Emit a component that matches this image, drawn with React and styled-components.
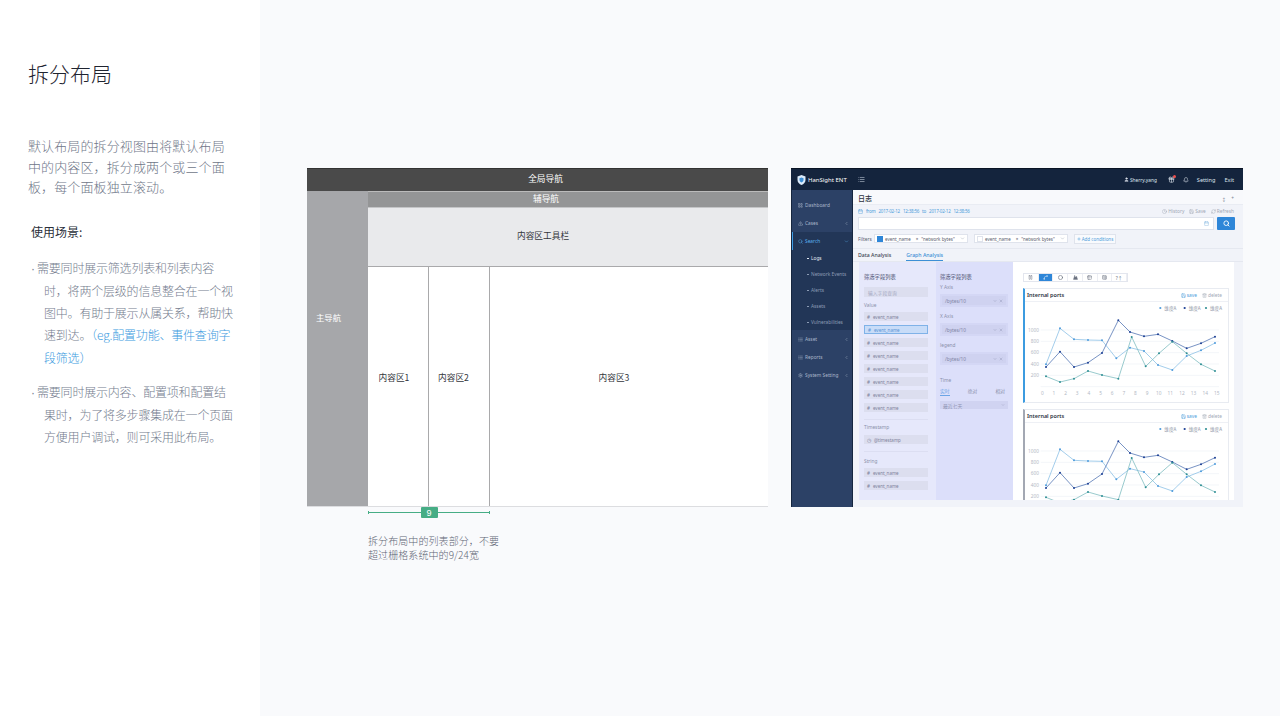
import React from 'react'
import styled, { createGlobalStyle } from 'styled-components'
import {
  AlertTriangle,
  Bell,
  Calendar,
  ChevronDown,
  ChevronLeft,
  Circle,
  Clock,
  Gift,
  LayoutGrid,
  List,
  Mountain,
  Pause,
  Plus,
  RefreshCw,
  Save,
  Search,
  Settings,
  Spline,
  Table2,
  TableProperties,
  Trash2,
  User,
  X,
} from 'lucide-react'

const CJK = `'Noto Sans CJK SC', 'Noto Sans', sans-serif`
const UI = `'Noto Sans', 'Noto Sans CJK SC', sans-serif`

// full-width punctuation of the Chinese copy
const COMMA = '\uFF0C'
const OPEN = '\uFF08'
const CLOSE = '\uFF09'

const GlobalStyle = createGlobalStyle`
  html, body {
    margin: 0;
    background: #fff;
    overflow: hidden;
  }
  * {
    box-sizing: border-box;
  }
`

const Page = styled.div`
  display: flex;
  height: 716px;
  width: 1280px;
  font-family: ${CJK};
`

const Aside = styled.aside`
  width: 260px;
  flex: none;
  padding: 58px 20px 0 28px;
  background: #fff;
`

const Title = styled.h1`
  margin: 0 0 48px;
  font-size: 21px;
  line-height: 30px;
  font-weight: 300;
  color: #1f2430;
`

const Intro = styled.p`
  margin: 0 12px 23px 0;
  font-size: 13px;
  letter-spacing: 0.12px;
  line-height: 20.5px;
  font-weight: 300;
  color: #6f7789;
`

const SceneTitle = styled.h2`
  margin: 0 0 14px 3px;
  font-size: 12px;
  line-height: 22px;
  font-weight: 400;
  color: #2a2f3a;
`

const Scene = styled.p`
  margin: 0 0 12px;
  padding-left: 16px;
  text-indent: -13px;
  font-size: 12px;
  letter-spacing: -0.2px;
  line-height: 22.25px;
  font-weight: 300;
  color: #747c8e;
`

const Bullet = styled.span`
  display: inline-block;
  width: 6px;
  text-indent: 0;
  font-family: 'Liberation Sans', sans-serif;
`

const Link = styled.span`
  color: #3c9be0;
`

const Main = styled.main`
  flex: 1;
  display: flex;
  align-items: flex-start;
  gap: 23px;
  padding: 168px 0 0 47px;
  background: #f9fafc;
`

const Diagram = styled.div`
  width: 461px;
  flex: none;
`

const Wire = styled.div`
  height: 339px;
  display: flex;
  flex-direction: column;
  border-bottom: 1px solid #dcdde0;
`

const GlobalBar = styled.div`
  height: 23px;
  flex: none;
  display: flex;
  align-items: center;
  justify-content: center;
  padding: 0 0 3px 16px;
  background: #4a4a4a;
  border-top: 1px solid #333;
  font-size: 8.7px;
  color: #fff;
`

const WireBody = styled.div`
  flex: 1;
  display: flex;
  min-height: 0;
`

const WireNav = styled.div`
  width: 61px;
  flex: none;
  display: flex;
  align-items: center;
  padding: 0 0 64px 9px;
  background: #a6a7aa;
  font-size: 8.4px;
  color: #fff;
`

const WireMain = styled.div`
  flex: 1;
  display: flex;
  flex-direction: column;
`

const SubBar = styled.div`
  height: 16px;
  flex: none;
  display: flex;
  align-items: center;
  justify-content: center;
  padding: 0 44px 3px 0;
  background: #949596;
  border-top: 1px solid #bbb;
  font-size: 8.7px;
  color: #fff;
`

const ToolBar = styled.div`
  height: 60px;
  flex: none;
  display: flex;
  align-items: center;
  justify-content: center;
  padding: 0 50px 4px 0;
  background: #e9eaec;
  border-top: 1px solid #c4c5c7;
  border-bottom: 1px solid #a9a9ab;
  font-size: 8.7px;
  color: #33363c;
`

const Panels = styled.div`
  flex: 1;
  display: flex;
  background: #fff;
`

const Pane = styled.div`
  display: flex;
  align-items: center;
  justify-content: center;
  width: ${(p) => p.$width};
  flex: ${(p) => (p.$grow ? 1 : 'none')};
  border-right: ${(p) => (p.$grow ? 'none' : '1px solid #a9a9ab')};
  padding: 0 ${(p) => p.$shift}px 18px 0;
  font-size: 8.7px;
  color: #33363c;
`

const Measure = styled.div`
  position: relative;
  width: 122px;
  height: 11px;
  margin-left: 61px;
  display: flex;
  align-items: center;
  justify-content: center;

  &::before {
    content: '';
    position: absolute;
    left: 0;
    right: 0;
    top: 5px;
    border-top: 1px solid #46ad85;
  }

  &::after {
    content: '';
    position: absolute;
    left: 0;
    right: 0;
    top: 4px;
    height: 3px;
    border-left: 1px solid #46ad85;
    border-right: 1px solid #46ad85;
  }
`

const Badge = styled.div`
  position: relative;
  width: 17px;
  height: 11px;
  display: flex;
  align-items: center;
  justify-content: center;
  background: #46ad85;
  border-radius: 1px;
  font-family: 'Liberation Sans', sans-serif;
  font-size: 9px;
  color: #fff;
`

const Caption = styled.p`
  margin: 16px 0 0 61px;
  font-size: 10px;
  line-height: 14px;
  letter-spacing: 0.08px;
  font-weight: 300;
  color: #5f6675;
`

/* the product screenshot on the right */
const Shot = styled.div`
  width: 452px;
  height: 339px;
  flex: none;
  display: flex;
  flex-direction: column;
  overflow: hidden;
  background: #f1f3f9;
  font-family: ${UI};
  font-size: 4.8px;
`

const ShotTop = styled.div`
  height: 22px;
  flex: none;
  display: flex;
  align-items: center;
  padding: 0 9px 0 6px;
  background: #14243d;
  border-top: 1px solid #0a1424;
  color: #dfe5ee;
`

const Logo = styled.div`
  width: 61px;
  display: flex;
  align-items: center;
  gap: 2px;
  font-size: 6px;
  color: #fff;
  white-space: nowrap;
`

const Collapse = styled(List)`
  color: #c6d0de;
`

const TopRight = styled.div`
  margin-left: auto;
  display: flex;
  align-items: center;
  font-size: 5.6px;
`

const TopUser = styled.span`
  display: flex;
  align-items: center;
  gap: 1px;
  margin-right: 11px;
  font-size: 4.8px;
`

const TopIcon = styled.span`
  position: relative;
  display: flex;
  margin-right: ${(p) => p.$gap}px;
`

const Dot = styled.i`
  position: absolute;
  top: -1px;
  right: -1px;
  width: 3px;
  height: 3px;
  border-radius: 50%;
  background: #f0504d;
`

const TopLink = styled.span`
  margin-left: ${(p) => p.$gap || 0}px;
`

const ShotBody = styled.div`
  flex: 1;
  display: flex;
  min-height: 0;
`

const Side = styled.nav`
  width: 62px;
  flex: none;
  padding-top: 6px;
  background: #2c4166;
  border-left: 1px solid #16263f;
  border-right: 1px solid #16263f;
`

const SideItem = styled.div`
  height: 18px;
  display: flex;
  align-items: center;
  gap: 2px;
  padding: 0 3px 0 5px;
  border-left: ${(p) => (p.$active ? '1px solid #3d9be3' : 'none')};
  margin-left: ${(p) => (p.$active ? '0' : '1px')};
  background: ${(p) => (p.$active ? '#223657' : 'transparent')};
  color: ${(p) => (p.$active ? '#59b1f0' : '#a9b6ca')};
  white-space: nowrap;
`

const SideArrow = styled.span`
  margin-left: auto;
  display: flex;
`

const SubMenu = styled.div`
  background: #223657;
`

const SubItem = styled.div`
  height: 16px;
  display: flex;
  align-items: center;
  padding-left: 15px;
  color: ${(p) => (p.$active ? '#e3e9f2' : '#8c9cb5')};
  white-space: nowrap;

  &::before {
    content: '';
    width: 2px;
    border-top: 1px solid currentColor;
    margin-right: 2px;
  }
`

const Content = styled.div`
  flex: 1;
  min-width: 0;
  display: flex;
  flex-direction: column;
`

const Head = styled.div`
  height: 15px;
  flex: none;
  display: flex;
  align-items: center;
  padding: 2px 9px 0 5px;
  border-bottom: 1px solid #e9ecf3;
  background: #f8f9fc;
`

const PageName = styled.div`
  font-family: ${CJK};
  font-size: 7px;
  font-weight: 500;
  color: #2c3240;
`

const HeadTools = styled.div`
  margin-left: auto;
  display: flex;
  gap: 5px;
  color: #7c8494;
`

const Meta = styled.div`
  height: 12px;
  flex: none;
  display: flex;
  align-items: center;
  padding: 0 9px 0 5px;
  color: #4d9ddb;
  white-space: nowrap;
`

const MetaFrom = styled.span`
  display: flex;
  align-items: center;
  gap: 3px;
  font-size: 4.5px;
  letter-spacing: -0.2px;
  word-spacing: 2px;
`

const MetaTools = styled.div`
  margin-left: auto;
  display: flex;
  gap: 5px;
  color: #a2a9b7;
`

const MetaTool = styled.span`
  display: flex;
  align-items: center;
  gap: 1px;
`

const SearchRow = styled.div`
  height: 13px;
  flex: none;
  display: flex;
  gap: 3px;
  padding: 0 8px 0 5px;
`

const SearchInput = styled.div`
  flex: 1;
  display: flex;
  align-items: center;
  justify-content: flex-end;
  padding-right: 4px;
  background: #fff;
  border: 1px solid #dfe3ec;
  color: #7fb4e0;
`

const SearchButton = styled.div`
  width: 18px;
  display: flex;
  align-items: center;
  justify-content: center;
  background: #2e86d8;
  border-radius: 1px;
  color: #fff;
`

const FilterRow = styled.div`
  height: 15px;
  margin-top: 1px;
  flex: none;
  display: flex;
  align-items: center;
  padding-left: 5px;
  color: #596070;
`

const FilterLabel = styled.span`
  width: 16px;
`

const Chip = styled.div`
  width: 94px;
  height: 9px;
  margin-right: 6px;
  display: flex;
  align-items: center;
  padding: 0 2px;
  background: #fff;
  border: 1px solid #dfe3ec;
  color: #596070;
  font-size: 4.5px;
  white-space: nowrap;
`

const Check = styled.span`
  width: 6px;
  height: 6px;
  flex: none;
  margin-right: 2px;
  background: ${(p) => (p.$on ? '#2e86d8' : '#fff')};
  border: 1px solid ${(p) => (p.$on ? '#2e86d8' : '#dfe3ec')};
`

const ChipOp = styled.span`
  margin: 0 3px 0 5px;
`

const ChipArrow = styled.span`
  margin-left: auto;
  display: flex;
  color: #9aa2b1;
`

const AddButton = styled.div`
  width: 42px;
  height: 10px;
  display: flex;
  align-items: center;
  justify-content: center;
  gap: 1px;
  background: #f9fafd;
  border: 1px solid #dfe3ec;
  color: #4d9ddb;
  font-size: 4.5px;
  white-space: nowrap;
`

const Tabs = styled.div`
  height: 14px;
  margin-top: 2px;
  flex: none;
  display: flex;
  align-items: center;
  gap: 15px;
  padding-left: 5px;
  border-top: 1px solid #e5e8f0;
  border-bottom: 1px solid #e5e8f0;
  font-size: 5.2px;
  font-weight: 500;
`

const Tab = styled.span`
  height: 100%;
  display: flex;
  align-items: center;
  color: ${(p) => (p.$active ? '#3c8fd6' : '#3f4653')};
  border-bottom: 1px solid ${(p) => (p.$active ? '#3c8fd6' : 'transparent')};
`

const Work = styled.div`
  flex: 1;
  min-height: 0;
  display: flex;
  margin: 0 9px 7px 6px;
  background: #fff;
`

const FieldPane = styled.div`
  width: ${(p) => p.$width}px;
  flex: none;
  padding: ${(p) => p.$pad};
  background: ${(p) => p.$bg};
  color: #8b90aa;
`

const PaneHead = styled.div`
  height: 8px;
  margin-top: 11px;
  display: flex;
  align-items: center;
  font-family: ${CJK};
  font-weight: 500;
  font-size: 5.3px;
  color: #6d7290;
`

const FieldSearch = styled.div`
  height: 10px;
  margin-top: 6px;
  display: flex;
  align-items: center;
  padding-left: 4px;
  background: #dcdeef;
  font-family: ${CJK};
  color: #a4a8c2;
`

const GroupLabel = styled.div`
  height: 8px;
  margin: ${(p) => p.$top}px 0 ${(p) => p.$bottom}px;
  display: flex;
  align-items: center;
`

const FieldList = styled.div`
  display: flex;
  flex-direction: column;
  gap: 4px;
`

const Field = styled.div`
  height: 9px;
  display: flex;
  align-items: center;
  gap: 3px;
  padding-left: 3px;
  font-size: 4.5px;
  background: ${(p) => (p.$active ? '#c8dcf8' : '#dcdeef')};
  border: ${(p) => (p.$active ? '1px solid #7fb2e8' : 'none')};
  color: ${(p) => (p.$active ? '#5a94d6' : '#7d829c')};
`

const Rule = styled.div`
  height: 1px;
  margin-top: 7px;
  background: #dcdef2;
`

const AxisLabel = styled.div`
  height: 8px;
  margin-top: ${(p) => p.$top}px;
  display: flex;
  align-items: center;
`

const AxisBox = styled.div`
  height: 13px;
  margin-top: 3px;
  padding: 2px;
  background: #d4d7f5;
`

const AxisValue = styled.div`
  height: 9px;
  display: flex;
  align-items: center;
  padding: 0 3px;
  background: #cfd2f0;
  color: #8085a6;
`

const AxisIcons = styled.span`
  margin-left: auto;
  display: flex;
  gap: 2px;
`

const TimeTabs = styled.div`
  height: 9px;
  margin-top: 3px;
  display: flex;
  justify-content: space-between;
  padding-right: 3px;
  font-family: ${CJK};
`

const TimeTab = styled.span`
  color: ${(p) => (p.$active ? '#6ba4e6' : '#8b90aa')};
  border-bottom: 1px solid ${(p) => (p.$active ? '#6ba4e6' : 'transparent')};
`

const TimeSelect = styled.div`
  height: 8px;
  margin-top: 5px;
  display: flex;
  align-items: center;
  padding: 0 3px;
  background: #d0d3f1;
  font-family: ${CJK};
  color: #9296b6;
`

const Charts = styled.div`
  flex: 1;
  min-width: 0;
  padding: 11px 5px 0 10px;
  overflow: hidden;
`

const ChartTools = styled.div`
  display: flex;
  width: 105px;
  height: 9px;
  border: 1px solid #e3e6ee;
`

const ChartTool = styled.span`
  flex: 1;
  display: flex;
  align-items: center;
  justify-content: center;
  background: ${(p) => (p.$active ? '#2e86d8' : '#fff')};
  color: ${(p) => (p.$active ? '#fff' : '#6b7280')};
  border-right: 1px solid #eceef3;
`

const Card = styled.section`
  height: ${(p) => p.$height}px;
  margin-top: 6px;
  overflow: hidden;
  background: #fff;
  border: 1px solid #e8ebf1;
  border-left: 2px solid ${(p) => p.$accent};
`

const CardHead = styled.div`
  height: 13px;
  display: flex;
  align-items: center;
  padding: 0 6px 0 2px;
  border-bottom: 1px solid #eef0f5;
`

const CardTitle = styled.span`
  font-size: 5.5px;
  font-weight: 600;
  color: #2c3240;
`

const CardAction = styled.span`
  display: flex;
  align-items: center;
  gap: 1px;
  margin-left: ${(p) => (p.$first ? 'auto' : '5px')};
  color: ${(p) => p.$color};
`

const ChartSvg = styled.svg`
  display: block;
`

const toX = (v) => v / 3 - 5
const toY = (v) => (v - 263) / 3

const series = [
  {
    color: '#4f9bdc',
    line: '#8cc0e6',
    points: [[78, 450], [120, 342], [162, 375], [204, 377], [246, 378], [289, 432], [330, 400], [372, 410], [414, 452], [457, 467], [500, 425], [543, 408], [585, 386]],
  },
  {
    color: '#1c3f94',
    line: '#5577b5',
    points: [[78, 458], [120, 412], [162, 458], [204, 445], [246, 416], [295, 318], [330, 353], [372, 366], [414, 360], [457, 380], [500, 402], [543, 387], [585, 367]],
  },
  {
    color: '#2f8f94',
    line: '#7fbcc0',
    points: [[78, 486], [120, 503], [162, 493], [204, 470], [246, 482], [295, 493], [335, 368], [377, 456], [417, 417], [457, 382], [500, 417], [543, 450], [585, 470]],
  },
]

const legend = [
  { x: 421, color: '#4f9bdc' },
  { x: 494, color: '#1c3f94' },
  { x: 558, color: '#2f8f94' },
]

const Chart = ({ height, ticks }) => (
  <ChartSvg width="204" height={height} viewBox={`0 0 204 ${height}`}>
    {legend.map((l) => (
      <g key={l.x}>
        <circle cx={toX(l.x)} cy="6" r="1.1" fill={l.color} />
        <text x={toX(l.x) + 4} y="7.7" fontSize="4.6" fill="#8d94a3" fontFamily="'Noto Sans CJK SC', sans-serif">
          维度A
        </text>
      </g>
    ))}
    {[1000, 800, 600, 400, 200, 0].map((v, i) => (
      <g key={v}>
        <line x1={toX(62)} x2={toX(597)} y1={toY(347 + i * 34)} y2={toY(347 + i * 34)} stroke="#eef2f7" strokeWidth="0.7" />
        {v > 0 && (
          <text x={toX(57)} y={toY(347 + i * 34) + 1.7} fontSize="4.8" textAnchor="end" fill="#b3b9c5" fontFamily="'Noto Sans', sans-serif">
            {v}
          </text>
        )}
      </g>
    ))}
    {ticks &&
      Array.from({ length: 16 }, (_, i) => (
        <text key={i} x={toX(67 + i * 34.9)} y="93" fontSize="4.8" textAnchor="middle" fill="#b3b9c5" fontFamily="'Noto Sans', sans-serif">
          {i}
        </text>
      ))}
    {series.map((s) => (
      <g key={s.color}>
        <polyline
          points={s.points.map(([x, y]) => `${toX(x)},${toY(y)}`).join(' ')}
          fill="none"
          stroke={s.line}
          strokeWidth="0.8"
        />
        {s.points.map(([x, y]) => (
          <circle key={x} cx={toX(x)} cy={toY(y)} r="1" fill={s.color} />
        ))}
      </g>
    ))}
  </ChartSvg>
)

const ChartCard = ({ accent, cardHeight, chartHeight, ticks }) => (
  <Card $accent={accent} $height={cardHeight}>
    <CardHead>
      <CardTitle>Internal ports</CardTitle>
      <CardAction $first $color="#4d9ddb">
        <Save size={5} />
        save
      </CardAction>
      <CardAction $color="#a2a9b7">
        <Trash2 size={5} />
        delete
      </CardAction>
    </CardHead>
    <Chart height={chartHeight} ticks={ticks} />
  </Card>
)

const FieldItem = ({ active, mark = '#', children }) => (
  <Field $active={active}>
    <span>{mark}</span>
    {children}
  </Field>
)

const AxisField = ({ label, top }) => (
  <>
    <AxisLabel $top={top}>{label}</AxisLabel>
    <AxisBox>
      <AxisValue>
        /bytes/10
        <AxisIcons>
          <ChevronDown size={4} />
          <X size={4} />
        </AxisIcons>
      </AxisValue>
    </AxisBox>
  </>
)

const ShieldLogo = () => (
  <svg width="9" height="10" viewBox="0 0 18 20">
    <path d="M9 0l8 3v7c0 5-3.500 8-8 10-4.500-2-8-5-8-10V3z" fill="#dcebfa" />
    <path d="M9 5l4 1.500v3.500c0 2.500-1.800 4-4 5-2.200-1-4-2.500-4-5V6.500z" fill="#3c8fd6" />
  </svg>
)

const ProductShot = () => (
  <Shot>
    <ShotTop>
      <Logo>
        <ShieldLogo />
        HanSight ENT
      </Logo>
      <Collapse size={7} />
      <TopRight>
        <TopUser>
          <User size={5} fill="currentColor" />
          Sherry.yang
        </TopUser>
        <TopIcon $gap={8}>
          <Gift size={7} />
          <Dot />
        </TopIcon>
        <TopIcon $gap={8}>
          <Bell size={6} />
        </TopIcon>
        <TopLink>Setting</TopLink>
        <TopLink $gap={9}>Exit</TopLink>
      </TopRight>
    </ShotTop>
    <ShotBody>
      <Side>
        <SideItem>
          <LayoutGrid size={5} />
          Dashboard
        </SideItem>
        <SideItem>
          <AlertTriangle size={5} />
          Cases
          <SideArrow>
            <ChevronLeft size={5} />
          </SideArrow>
        </SideItem>
        <SideItem $active>
          <Search size={5} />
          Search
          <SideArrow>
            <ChevronDown size={5} />
          </SideArrow>
        </SideItem>
        <SubMenu>
          <SubItem $active>Logs</SubItem>
          <SubItem>Network Events</SubItem>
          <SubItem>Alerts</SubItem>
          <SubItem>Assets</SubItem>
          <SubItem>Vulnerabilities</SubItem>
        </SubMenu>
        <SideItem>
          <List size={5} />
          Asset
          <SideArrow>
            <ChevronLeft size={5} />
          </SideArrow>
        </SideItem>
        <SideItem>
          <List size={5} />
          Reports
          <SideArrow>
            <ChevronLeft size={5} />
          </SideArrow>
        </SideItem>
        <SideItem>
          <Settings size={5} />
          System Setting
          <SideArrow>
            <ChevronLeft size={5} />
          </SideArrow>
        </SideItem>
      </Side>
      <Content>
        <Head>
          <PageName>日志</PageName>
          <HeadTools>
            <span>↕</span>
            <span>+</span>
          </HeadTools>
        </Head>
        <Meta>
          <MetaFrom>
            <Calendar size={5} />
            from 2017-02-12 12:38:56 to 2017-02-12 12:38:56
          </MetaFrom>
          <MetaTools>
            <MetaTool>
              <Clock size={5} />
              History
            </MetaTool>
            <MetaTool>
              <Save size={5} />
              Save
            </MetaTool>
            <MetaTool>
              <RefreshCw size={5} />
              Refresh
            </MetaTool>
          </MetaTools>
        </Meta>
        <SearchRow>
          <SearchInput>
            <Calendar size={5} />
          </SearchInput>
          <SearchButton>
            <Search size={7} strokeWidth={3} />
          </SearchButton>
        </SearchRow>
        <FilterRow>
          <FilterLabel>Filters</FilterLabel>
          <Chip>
            <Check $on />
            event_name
            <ChipOp>×</ChipOp>
            "network bytes"
            <ChipArrow>
              <ChevronDown size={5} />
            </ChipArrow>
          </Chip>
          <Chip>
            <Check />
            event_name
            <ChipOp>×</ChipOp>
            "network bytes"
            <ChipArrow>
              <ChevronDown size={5} />
            </ChipArrow>
          </Chip>
          <AddButton>
            <Plus size={4} strokeWidth={3} />
            Add conditions
          </AddButton>
        </FilterRow>
        <Tabs>
          <Tab>Data Analysis</Tab>
          <Tab $active>Graph Analysis</Tab>
        </Tabs>
        <Work>
          <FieldPane $width={77} $bg="#e6e8fb" $pad="0 8px 0 5px">
            <PaneHead>筛选字段列表</PaneHead>
            <FieldSearch>输入字段查询</FieldSearch>
            <GroupLabel $top={4} $bottom={3}>Value</GroupLabel>
            <FieldList>
              <FieldItem>event_name</FieldItem>
              <FieldItem active>event_name</FieldItem>
              <FieldItem>event_name</FieldItem>
              <FieldItem>event_name</FieldItem>
              <FieldItem>event_name</FieldItem>
              <FieldItem>event_name</FieldItem>
              <FieldItem>event_name</FieldItem>
              <FieldItem>event_name</FieldItem>
            </FieldList>
            <Rule />
            <GroupLabel $top={3} $bottom={4}>Timestamp</GroupLabel>
            <FieldItem mark="◷">@timestamp</FieldItem>
            <Rule />
            <GroupLabel $top={5} $bottom={3}>String</GroupLabel>
            <FieldList>
              <FieldItem>event_name</FieldItem>
              <FieldItem>event_name</FieldItem>
            </FieldList>
          </FieldPane>
          <FieldPane $width={77} $bg="#dcdffa" $pad="0 5px 0 4px">
            <PaneHead>筛选字段列表</PaneHead>
            <AxisField label="Y Axis" top={2} />
            <AxisField label="X Axis" top={5} />
            <AxisField label="legend" top={5} />
            <AxisLabel $top={11}>Time</AxisLabel>
            <TimeTabs>
              <TimeTab $active>实时</TimeTab>
              <TimeTab>绝对</TimeTab>
              <TimeTab>相对</TimeTab>
            </TimeTabs>
            <TimeSelect>
              最近七天
              <AxisIcons>
                <ChevronDown size={4} />
              </AxisIcons>
            </TimeSelect>
          </FieldPane>
          <Charts>
            <ChartTools>
              <ChartTool>
                <Pause size={5} />
              </ChartTool>
              <ChartTool $active>
                <Spline size={5} />
              </ChartTool>
              <ChartTool>
                <Circle size={5} strokeWidth={3} />
              </ChartTool>
              <ChartTool>
                <Mountain size={5} fill="currentColor" />
              </ChartTool>
              <ChartTool>
                <Table2 size={5} />
              </ChartTool>
              <ChartTool>
                <TableProperties size={5} />
              </ChartTool>
              <ChartTool>?↑</ChartTool>
            </ChartTools>
            <ChartCard accent="#3c9be0" cardHeight={115} chartHeight={102} ticks />
            <ChartCard accent="#a3a8b3" cardHeight={120} chartHeight={78} />
          </Charts>
        </Work>
      </Content>
    </ShotBody>
  </Shot>
)

const App = () => (
  <>
    <GlobalStyle />
    <Page>
      <Aside>
        <Title>拆分布局</Title>
        <Intro>{`默认布局的拆分视图由将默认布局中的内容区${COMMA}拆分成两个或三个面板${COMMA}每个面板独立滚动。`}</Intro>
        <SceneTitle>使用场景:</SceneTitle>
        <Scene>
          <Bullet>·</Bullet>需要同时展示筛选列表和列表内容
          <br />
          {`时${COMMA}将两个层级的信息整合在一个视`}
          <br />
          {`图中。有助于展示从属关系${COMMA}帮助快`}
          <br />
          速到达。<Link>{`${OPEN}eg.配置功能、事件查询字`}
          <br />
          {`段筛选${CLOSE}`}</Link>
        </Scene>
        <Scene>
          <Bullet>·</Bullet>需要同时展示内容、配置项和配置结
          <br />
          {`果时${COMMA}为了将多步骤集成在一个页面`}
          <br />
          {`方便用户调试${COMMA}则可采用此布局。`}
        </Scene>
      </Aside>
      <Main>
        <Diagram>
          <Wire>
            <GlobalBar>全局导航</GlobalBar>
            <WireBody>
              <WireNav>主导航</WireNav>
              <WireMain>
                <SubBar>辅导航</SubBar>
                <ToolBar>内容区工具栏</ToolBar>
                <Panels>
                  <Pane $width="61px" $shift={8}>内容区1</Pane>
                  <Pane $width="61px" $shift={11}>内容区2</Pane>
                  <Pane $grow $shift={30}>内容区3</Pane>
                </Panels>
              </WireMain>
            </WireBody>
          </Wire>
          <Measure>
            <Badge>9</Badge>
          </Measure>
          <Caption>
            {`拆分布局中的列表部分${COMMA}不要`}
            <br />
            超过栅格系统中的9/24宽
          </Caption>
        </Diagram>
        <ProductShot />
      </Main>
    </Page>
  </>
)

export default App
